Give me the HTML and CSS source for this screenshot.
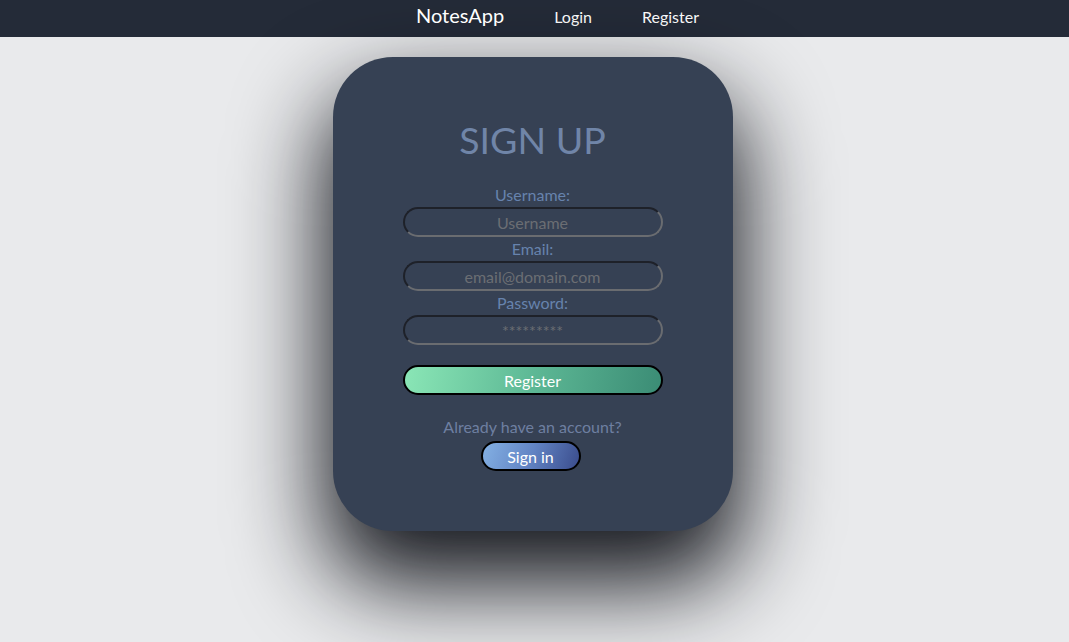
FILE: index.html
```html
<!DOCTYPE html>
<html>
<head>
<meta charset="utf-8">
<link rel="stylesheet" href="styles.css">
</head>
<body>
<nav class="navbar">
  <a class="brand">NotesApp</a>
  <a class="nav-link">Login</a>
  <a class="nav-link">Register</a>
</nav>
<main class="main">
  <div class="card">
    <h1 class="title">SIGN UP</h1>
    <form class="form">
      <label class="label">Username:</label>
      <input class="input" type="text" placeholder="Username">
      <label class="label">Email:</label>
      <input class="input" type="email" placeholder="email@domain.com">
      <label class="label">Password:</label>
      <input class="input" type="text" placeholder="*********">
      <button class="btn-register" type="button">Register</button>
    </form>
    <p class="already">Already have an account?</p>
    <button class="btn-signin" type="button">Sign in</button>
  </div>
</main>
</body>
</html>
```
FILE: styles.css
```css
html, body {
  margin: 0;
  padding: 0;
}
body {
  background: #e9eaec;
  font-family: Lato, "Open Sans", sans-serif;
  min-height: 642px;
  overflow: hidden;
}
.navbar {
  height: 37px;
  box-sizing: border-box;
  background: #242b38;
  display: flex;
  align-items: center;
  justify-content: center;
  gap: 50px;
  padding-left: 46px;
  padding-bottom: 5px;
}
.brand {
  color: #ffffff;
  font-size: 20px;
  position: relative;
  top: -1px;
}
.nav-link {
  color: #ffffff;
  font-size: 16px;
}
.main {
  display: flex;
  justify-content: center;
  padding-top: 20px;
  padding-right: 4px;
}
.card {
  width: 400px;
  box-sizing: border-box;
  background: #364154;
  border-radius: 60px;
  padding: 59px 0 60px;
  display: flex;
  flex-direction: column;
  align-items: center;
  box-shadow: 0 45px 90px 8px rgba(10, 12, 18, 0.95);
}
.title {
  margin: 0;
  font-size: 37.5px;
  line-height: 48px;
  font-weight: 400;
  color: #7085a8;
}
.form {
  margin-top: 21px;
  display: flex;
  flex-direction: column;
  align-items: center;
}
.label {
  font-size: 16px;
  line-height: 20px;
  color: #6783ad;
  margin-bottom: 2px;
}
.input {
  width: 260px;
  height: 30px;
  box-sizing: border-box;
  border-radius: 15px;
  border: 2px solid;
  border-color: #1e2129 #6a6c70 #6a6c70 #1e2129;
  background: transparent;
  text-align: center;
  font-family: Lato, sans-serif;
  font-size: 16px;
  color: #ddd;
  margin-bottom: 2px;
  outline: none;
}
.input::placeholder {
  color: #6b6e73;
}
.btn-register {
  margin-top: 18px;
  width: 260px;
  height: 30px;
  border-radius: 15px;
  border: 2px solid #000;
  background: linear-gradient(100deg, #8ae6b6 0%, #5db895 50%, #3b8c75 100%);
  color: #fff;
  font-family: Lato, sans-serif;
  font-size: 16px;
  padding: 0;
}
.already {
  margin: 22px 0 0;
  font-size: 16px;
  line-height: 20px;
  color: #6e7fa1;
}
.btn-signin {
  margin-top: 4px;
  margin-right: 4px;
  width: 100px;
  height: 30px;
  border-radius: 15px;
  border: 2px solid #000;
  background: linear-gradient(110deg, #84b1e4 0%, #6284c4 50%, #3a4c8c 100%);
  color: #fff;
  font-family: Lato, sans-serif;
  font-size: 16px;
  padding: 0;
}
```
